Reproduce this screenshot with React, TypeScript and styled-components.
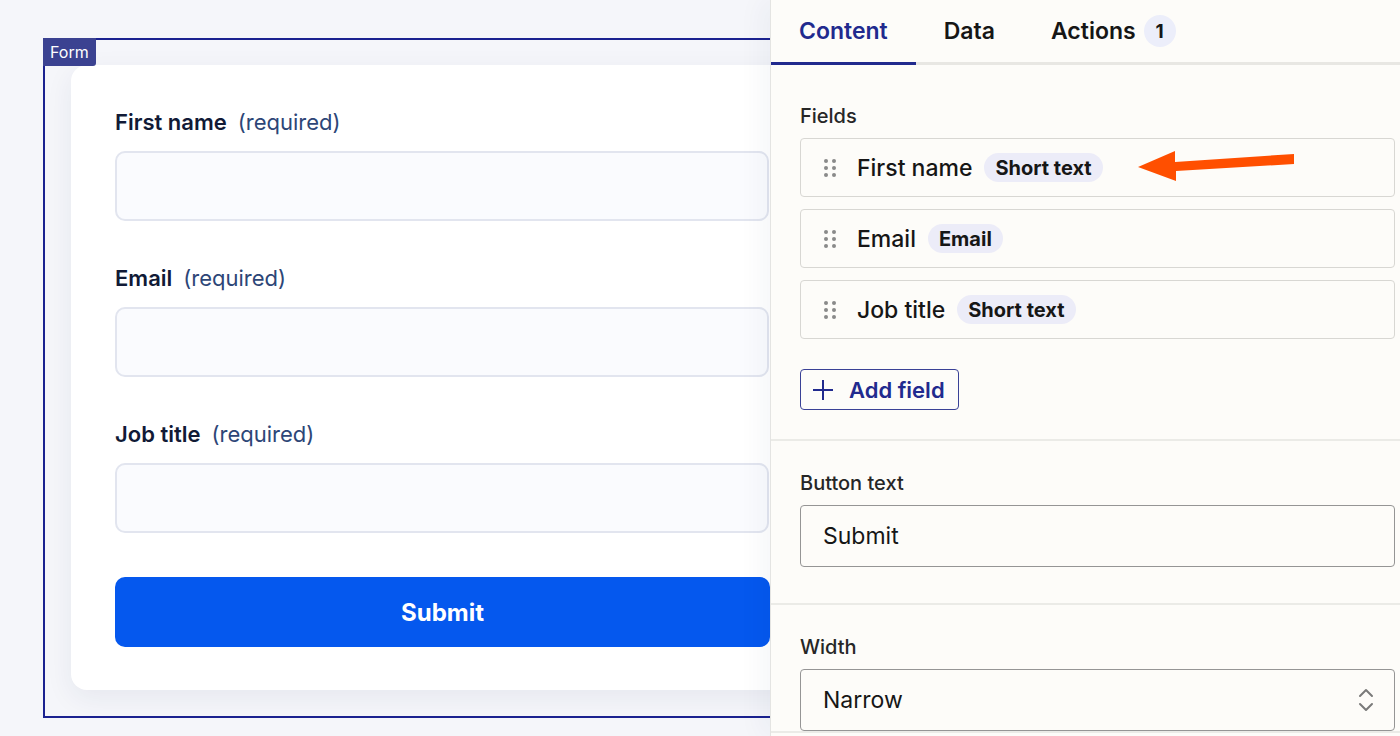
import styled, { createGlobalStyle } from 'styled-components';

const GlobalStyle = createGlobalStyle`
    html, body {
        margin: 0;
        padding: 0;
        background: #f5f6fa;
        font-family: Inter, "Noto Sans", sans-serif;
        -webkit-font-smoothing: antialiased;
    }
    * { box-sizing: border-box; }
`

const Page = styled.div`
    display: flex;
    width: 1400px;
    height: 736px;
    overflow: hidden;
`

const Canvas = styled.div`
    flex: none;
    width: 770px;
    height: 736px;
    overflow: hidden;
    padding: 38px 0 0 43px;
    background: #f5f6fa;
`

const Frame = styled.div`
    position: relative;
    display: flex;
    flex-direction: column;
    width: 820px;
    height: 680px;
    border: 2px solid #1b2290;
    padding: 25px 0 26px 26px;
`

const FrameTag = styled.span`
    position: absolute;
    top: -2px;
    left: -2px;
    height: 28px;
    padding: 0 7px;
    display: flex;
    align-items: center;
    background: #3b4291;
    color: #fff;
    font-size: 16px;
    border-radius: 0 0 3px 0;
`

const Card = styled.div`
    flex: 1;
    width: 743px;
    background: #fff;
    border-radius: 16px;
    box-shadow: 0 8px 28px rgba(30, 40, 90, 0.07);
    padding: 43px 44px 0 44px;
    display: flex;
    flex-direction: column;
    gap: 43px;
`

const Group = styled.div`
    display: flex;
    flex-direction: column;
    gap: 15px;
`

const Label = styled.div`
    font-size: 22px;
    line-height: 28px;
    font-weight: 600;
    color: #111a36;
    span {
        font-weight: 400;
        color: #2d4677;
        margin-left: 11px;
    }
`

const FormInput = styled.div`
    height: 70px;
    width: 654px;
    border: 2px solid #e2e5ef;
    background: #fafbfe;
    border-radius: 10px;
`

const SubmitButton = styled.button`
    width: 655px;
    height: 70px;
    margin-top: 1px;
    border: none;
    border-radius: 10px;
    background: #0558ee;
    color: #fff;
    font-family: Inter, sans-serif;
    font-size: 24px;
    font-weight: 700;
`

const Panel = styled.div`
    position: relative;
    z-index: 1;
    flex: 1;
    background: #fdfcf9;
    border-left: 1px solid #e4e4e2;
    box-shadow: -10px 0 24px rgba(30, 40, 90, 0.04);
    display: flex;
    flex-direction: column;
`

const Tabs = styled.div`
    display: flex;
    height: 65px;
    border-bottom: 3px solid #e8e7e3;
`

const Tab = styled.div<{ $active?: boolean }>`
    display: flex;
    align-items: center;
    gap: 8px;
    padding: 0 28px;
    margin-bottom: -3px;
    font-size: 23px;
    font-weight: 600;
    color: ${p => (p.$active ? '#212a8e' : '#161616')};
    border-bottom: 3px solid ${p => (p.$active ? '#212a8e' : 'transparent')};
`

const CountBadge = styled.span`
    width: 32px;
    height: 32px;
    border-radius: 50%;
    background: #eceefa;
    display: flex;
    align-items: center;
    justify-content: center;
    font-size: 19px;
    font-weight: 700;
`

const Section = styled.div<{ $top: number; $bottom: number }>`
    padding: ${p => p.$top}px 5px ${p => p.$bottom}px 29px;
    border-bottom: 2px solid #ebebe7;
    display: flex;
    flex-direction: column;
    &:last-child { border-bottom: none; }
`

const SectionLabel = styled.div`
    font-size: 20px;
    line-height: 22px;
    font-weight: 500;
    color: #262626;
    margin-bottom: 11px;
`

const FieldList = styled.div`
    display: flex;
    flex-direction: column;
    gap: 12px;
    margin-bottom: 30px;
`

const FieldRow = styled.div`
    height: 59px;
    border: 1px solid #d8d7d3;
    border-radius: 4px;
    display: flex;
    align-items: center;
    padding-left: 23px;
`

const FieldName = styled.span`
    margin-left: 21px;
    font-size: 23px;
    font-weight: 500;
    color: #161616;
`

const TypeBadge = styled.span`
    margin-left: 12px;
    height: 29px;
    padding: 0 11px;
    border-radius: 15px;
    background: #ececf8;
    display: flex;
    align-items: center;
    font-size: 20px;
    font-weight: 700;
    color: #161616;
`

const AddButton = styled.button`
    align-self: flex-start;
    height: 41px;
    padding: 0 13px 0 11px;
    display: flex;
    align-items: center;
    gap: 15px;
    background: transparent;
    border: 1.5px solid #3a4196;
    border-radius: 4px;
    color: #212a8e;
    font-family: Inter, sans-serif;
    font-size: 22px;
    font-weight: 600;
`

const TextBox = styled.div`
    height: 62px;
    border: 1.5px solid #959595;
    border-radius: 4px;
    display: flex;
    align-items: center;
    justify-content: space-between;
    padding: 0 20px 0 22px;
    font-size: 23px;
    color: #161616;
`

const Arrow = styled.svg`
    position: absolute;
    left: 359px;
    top: 145px;
    pointer-events: none;
`

const DragHandle = () => (
    <svg width="12" height="20" viewBox="0 0 12 20">
        {[3, 10, 17].map(y =>
            [2, 10].map(x => <circle key={`${x}-${y}`} cx={x} cy={y} r="2" fill="#8a8a8a" />)
        )}
    </svg>
)

const fields = [
    { name: 'First name', type: 'Short text' },
    { name: 'Email', type: 'Email' },
    { name: 'Job title', type: 'Short text' },
]

const App = () => {
    return (
        <>
            <GlobalStyle />
            <Page>
                <Canvas>
                    <Frame>
                        <FrameTag>Form</FrameTag>
                        <Card>
                            {fields.map(f => (
                                <Group key={f.name}>
                                    <Label>{f.name}<span>(required)</span></Label>
                                    <FormInput />
                                </Group>
                            ))}
                            <SubmitButton>Submit</SubmitButton>
                        </Card>
                    </Frame>
                </Canvas>
                <Panel>
                    <Tabs>
                        <Tab $active>Content</Tab>
                        <Tab>Data</Tab>
                        <Tab>Actions<CountBadge>1</CountBadge></Tab>
                    </Tabs>
                    <Section $top={40} $bottom={29}>
                        <SectionLabel>Fields</SectionLabel>
                        <FieldList>
                            {fields.map(f => (
                                <FieldRow key={f.name}>
                                    <DragHandle />
                                    <FieldName>{f.name}</FieldName>
                                    <TypeBadge>{f.type}</TypeBadge>
                                </FieldRow>
                            ))}
                        </FieldList>
                        <AddButton>
                            <svg width="22" height="22" viewBox="0 0 22 22">
                                <path d="M11 1v20M1 11h20" stroke="#212a8e" strokeWidth="2" fill="none" />
                            </svg>
                            Add field
                        </AddButton>
                    </Section>
                    <Section $top={31} $bottom={36}>
                        <SectionLabel>Button text</SectionLabel>
                        <TextBox>Submit</TextBox>
                    </Section>
                    <Section $top={31} $bottom={0}>
                        <SectionLabel>Width</SectionLabel>
                        <TextBox>
                            Narrow
                            <svg width="16" height="26" viewBox="0 0 16 26">
                                <path d="M2 9l6-6 6 6M2 17l6 6 6-6" stroke="#7a7a7a" strokeWidth="2" fill="none" strokeLinecap="round" strokeLinejoin="round" />
                            </svg>
                        </TextBox>
                    </Section>
                    <Arrow width="170" height="40" viewBox="1130 145 170 40">
                        <polygon
                            points="1138,167 1175,151 1175,162 1294,154 1294,164 1176,171 1176,181"
                            fill="#ff4f00"
                        />
                    </Arrow>
                </Panel>
            </Page>
        </>
    )
}

export default App;
